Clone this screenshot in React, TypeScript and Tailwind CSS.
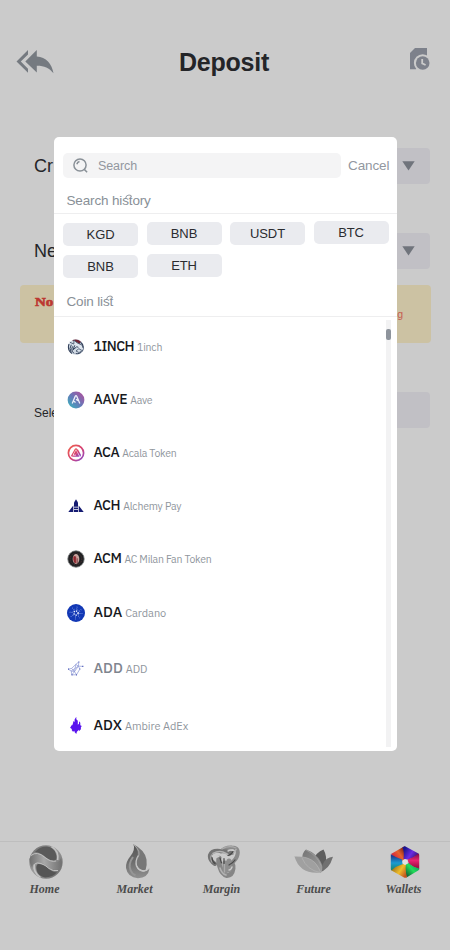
import React from "react";

const arial = "font-['Liberation_Sans',Arial,sans-serif]";
const plex = "font-['IBM_Plex_Sans','Noto_Sans',sans-serif]";

function ReplyAll() {
  return (
    <svg className="block h-[24px] w-[38px]" viewBox="0 0 38 24" fill="#757a80">
      <path d="M12 0v4.6L4.8 11.6 12 18.8v4L.5 11.6z" />
      <path d="M20.8 0v6.4C30 7 36 13.5 37.5 23.3 33 17.8 28 15.7 20.8 15.8v6.6L9.3 11.5z" />
    </svg>
  );
}

function Records() {
  return (
    <svg className="block h-[23px] w-[21px]" viewBox="0 0 21 23">
      <path d="M0 5 5 0h12v9L6 21.3H0z" fill="#7d818b" />
      <circle cx="12.7" cy="15" r="8.8" fill="#cbcbcb" />
      <circle cx="12.7" cy="15" r="6.8" fill="#7d818b" />
      <path d="M12.2 11v4.4l3.4 1.6" fill="none" stroke="#cbcbcb" strokeWidth="1.8" />
    </svg>
  );
}

function SelectButton() {
  return (
    <div className="flex h-[36px] w-[48px] items-center rounded-[4px] bg-[#c1c0c5] pl-[20px]">
      <svg className="block h-[10px] w-[13px]" viewBox="0 0 13 10" fill="#70747c"><path d="M.3.3h12.4L6.5 9.5z" /></svg>
    </div>
  );
}

function Chip({ label, className }: { label: string; className: string }) {
  return (
    <div className={"flex h-[23px] w-[75px] items-center justify-center rounded-[5px] bg-[#eaebef] text-[13px] tracking-[-0.1px] text-[#2b2c30] " + className}>
      {label}
    </div>
  );
}

/* Heading ending in an "st" pair joined by a small arc. */
function LigatureTitle({ before, after = "" }: { before: string; after?: string }) {
  return (
    <span>
      {before}
      <span className="relative">
        st
        <svg className="absolute top-[1px] left-[3px] h-[5px] w-[8px]" viewBox="0 0 8 5" fill="none" stroke="#899097" strokeWidth=".9">
          <path d="M.5 4.5Q1 1 4 1T6.4 3.2" />
        </svg>
      </span>
      {after}
    </span>
  );
}

const icons: Record<string, React.ReactNode> = {
  "1INCH": (
    <g>
      <circle cx="9" cy="9" r="7.7" fill="#cfd8e2" />
      <path d="M5 2.3Q10 0 14 3.7L12.5 6 9.3 4z" fill="#712334" />
      <path d="M2.8 4.2 6.8 6.1 7 2.3l3 2.5 5.2 2.4 1.3 3.5-1 2.1-3.6-2.1L9 13l3 1.5 2-1" fill="#dfe6ee" stroke="#3a4a63" strokeWidth=".8" />
      <path d="M4.3 6.8Q1.8 10.4 4.1 14M5.8 8.3Q3.3 11.6 7 15.5M7.8 7.3 6 11.8l3.7-3 1.7.5M8.7 15.6q4.6.8 6.9-3" fill="none" stroke="#35445e" strokeWidth="1" />
      <path d="M13.5 4.3q3 2 2.7 5.4M2 6q-2 6 3 9.5" fill="none" stroke="#33415a" strokeWidth="1.1" />
    </g>
  ),
  AAVE: (
    <g>
      <circle cx="9" cy="9" r="8.4" fill="url(#aave)" />
      <path d="m5.2 12.5 3-7.1q.8-1.4 1.6 0l3 7.1M7 10.3l1.5 1.2M9.1 8.3l1.8 1.5" fill="none" stroke="#eef1fa" strokeWidth="1.25" />
    </g>
  ),
  ACA: (
    <g fill="none" stroke="url(#aca)">
      <circle cx="9" cy="9" r="7.6" strokeWidth="1.7" />
      <path d="M4.4 12.2 8 5.7q1-1.5 2 0l3.6 6.5M5.2 12.2h6.3L9 7.4l-1.8 3.4M8.2 8.9l2 3.2M10.5 5.8l3 5.5" strokeWidth="1.2" />
    </g>
  ),
  ACH: (
    <g fill="#151b72">
      <path d="M9 2.2 11 5.5v4.3H7V5.5z" />
      <path d="M6.3 8.6v6.3H1.3zM11.7 8.6v6.3h5zM7 10.6h4v1.6H7zM7 13h4v1.9H7z" />
    </g>
  ),
  ACM: (
    <g>
      <circle cx="9" cy="9" r="8.2" fill="#1f2022" stroke="#777a7b" strokeWidth=".8" />
      <circle cx="9" cy="9" r="5.8" fill="none" stroke="#583536" strokeWidth=".8" strokeDasharray="1 1" />
      <ellipse cx="9" cy="9" rx="3.3" ry="5" fill="#c8a49f" />
      <path d="M6.2 6.5h3v7q-2.8-1-3-4z" fill="#a8343c" />
      <path d="M7.8 6v7M10.2 8.3v5" stroke="#702830" strokeWidth=".8" />
    </g>
  ),
  ADA: (
    <g>
      <circle cx="9" cy="9" r="9" fill="#1238b5" />
      <circle cx="9" cy="9" r="2.1" fill="none" stroke="#e4ebff" strokeWidth="1.5" strokeDasharray="1.25 .95" />
      <circle cx="9" cy="9" r="4" fill="none" stroke="#b5c9fa" strokeWidth="1" strokeDasharray=".9 2.24" />
      <circle cx="9" cy="9" r="6" fill="none" stroke="#9cb5f4" strokeWidth=".9" strokeDasharray=".8 3.91" />
    </g>
  ),
  ADD: (
    <g fill="none" stroke="#8d98d6" strokeWidth=".7">
      <path d="m1.2 9.2 3.4-.8 4.2-4 3-2.5-.4 4.2 1.4 3-3.3 5.7H4.8L4.2 11zM4.6 8.4l2.9 3.2 3.9-5.5M8.8 4.4l-1.3 7.2 2 3.2M4.2 11l3.3.6-2.7 3.2M8.8 4.4l2.6 1.7-7.2 4.9M11.4 6.1l4.2.3" />
      <path d="M1 9.2h1M11.4 2h1M12.4 9h1M4.5 14.9h1M9 14.9h1M15.1 6.4h1.3" stroke="#5966bd" strokeWidth="1.2" />
    </g>
  ),
  ADX: (
    <path d="M9.3.7v2.5l1.5 1.5v4l1.2-1V5.3l1.3 1.5v2.5l1.5.7-.9 1.2v2l-2 2v-1.5l-2 2-.6 2.3-1.8-2v-1.2l-1.5 1-1.2-1.5V13l-1.7-1.3 2-3.3.3 1.1 1.1-4.5 1.1.9V3.6z" fill="#5913ee" />
  ),
};

const coins = [
  { symbol: "1INCH", name: "1inch", row: "h-[53px]", s: "text-[14px] tracking-[-0.5px]", n: "text-[10.5px] tracking-[-0.2px]", muted: false },
  { symbol: "AAVE", name: "Aave", row: "h-[53px]", s: "text-[14px] tracking-[-0.35px]", n: "text-[10.5px] tracking-[-0.3px]", muted: false },
  { symbol: "ACA", name: "Acala Token", row: "h-[53px]", s: "text-[14px] tracking-[-0.4px]", n: "text-[10.5px] tracking-[-0.25px]", muted: false },
  { symbol: "ACH", name: "Alchemy Pay", row: "h-[53px]", s: "text-[14px] tracking-[-0.4px]", n: "text-[10.5px] tracking-[-0.2px]", muted: false },
  { symbol: "ACM", name: "AC Milan Fan Token", row: "h-[53px]", s: "text-[14px] tracking-[-0.4px]", n: "text-[10.5px] tracking-[-0.25px]", muted: false },
  { symbol: "ADA", name: "Cardano", row: "h-[55px]", s: "text-[14.5px] tracking-[0px]", n: "text-[11px] tracking-[-0.05px]", muted: false },
  { symbol: "ADD", name: "ADD", row: "h-[57px]", s: "text-[14.5px] tracking-[0px]", n: "text-[11px] tracking-[-0.2px]", muted: true },
  { symbol: "ADX", name: "Ambire AdEx", row: "h-[56px]", s: "text-[14.5px] tracking-[0px]", n: "text-[11px] tracking-[-0.05px]", muted: false },
];

function CoinRow({ coin }: { coin: (typeof coins)[number] }) {
  return (
    <div className={"flex items-center " + coin.row}>
      <svg className="block h-[18px] w-[18px] shrink-0" viewBox="0 0 18 18">{icons[coin.symbol]}</svg>
      <div className={"ml-[8.5px] flex items-baseline whitespace-nowrap " + plex}>
        <span className={"leading-[18px] font-medium " + coin.s + (coin.muted ? " text-[#7e858e]" : " text-[#17191d]")}>{coin.symbol}</span>
        <span className={"ml-[3px] leading-[18px] text-[#90969d] " + coin.n}>{coin.name}</span>
      </div>
    </div>
  );
}

function HomeIcon() {
  return (
    <svg className="block h-[34px] w-[36px]" viewBox="0 0 36 34">
      <circle cx="18" cy="17" r="16.7" fill="url(#silver)" />
      <path d="M7 7Q12 1.5 19 1.6q7 .7 9 7.4 1.5 5-1 6.5-5 .5-9-3Q13 7.500 7 7z" fill="#5a5a5a" />
      <path d="M29 27.500q-5 5-12 4.900-7-1-8.500-7.400-1-5 1.500-6 5-.4 9 2.700Q23 27 29 27.500z" fill="#555" />
      <path d="M1.500 14Q4 7.500 10 9q5 1 9 5.500 5 4 10 2.500 3-1 4-4 2.500 8-2 11-6 2.500-12-2.500-5-5-10-4-4 .5-5 5-2.500-4-2.500-8.500z" fill="url(#band)" />
      <path d="M3 10.500q6-5 14 2 6 5 11 3.500M6 24q-1-8 7-5.500 4 1.300 8 5 4 3 9 2" fill="none" stroke="#c0c0c0" strokeWidth="1" />
      <path d="M23.500 1.500Q31 6 29.700 15M6.300 19.500q-1.300 8 6.200 13" fill="none" stroke="#c4c4c4" strokeWidth="1.500" />
    </svg>
  );
}
function MarketIcon() {
  return (
    <svg className="block h-[35px] w-[25px]" viewBox="0 0 25 35">
      <path d="M8.500.300q11.500 6 13 15.200.8 6-1 11-7 0-9-6.500-1-5 1-10z" fill="#777" />
      <path d="M8.500.300Q10.500 6 5.500 12 .500 18 1 24q1.500 9.500 12 10.200 10 0 11.500-9.700-3 3.500-7 3-6-1.500-6.300-7Q11 16 13 12 13 5 8.500.300z" fill="url(#flame)" />
      <path d="M13.300 11.500Q10 17 11.500 22q2.500 5.500 7.500 5 3.500-.500 5-3" fill="none" stroke="#c4c4c4" strokeWidth="1.300" />
      <path d="M9 1q8 7 3.500 13" fill="none" stroke="#b5b5b5" strokeWidth=".8" />
      <path d="M8 13q-5 7-2.500 13 1.500 4 5 5.500" fill="none" stroke="#969696" strokeWidth="2" />
    </svg>
  );
}
function MarginIcon() {
  return (
    <svg className="block h-[33px] w-[34px]" viewBox="0 0 34 33">
      <g fill="none" strokeLinecap="round">
        <path d="M14 6.500Q18 2 25 2.500q7 0 5.500 7-1 5-6.500 9" stroke="#8a8a8a" strokeWidth="4" />
        <path d="M8 19Q2 15 3 10q2-5 10-4 7 0 12 2" stroke="#747474" strokeWidth="4" />
        <path d="M12 13q-1 3 1 9 2 7 7 8.500 5 0 6-7 .500-3-1-5" stroke="#858585" strokeWidth="5" />
        <path d="M18 18v10M22 16v9" stroke="#8e8e8e" strokeWidth="5" />
        <path d="M6 8.500q7-4 13 0l3 2q5-2 7-6M13 23q2 6 6 7" stroke="#b2b2b2" strokeWidth="1.600" />
        <path d="M15 4Q22 0 29 3M5 17q-2-4-.500-7M17.500 19v8" stroke="#ababab" strokeWidth="1.200" />
        <path d="M8 18.500q-3-2-3-6M13 13l1.500 5M17 13.500v5M22 20q4-2 6-5M21 10.500q4-1 5-4" stroke="#484848" strokeWidth="1.200" />
        <path d="M9 12.500 12 11M22 25q2 0 3-3M21 6q3-1.500 5-1" stroke="#cbcbcb" strokeWidth="1.400" />
      </g>
    </svg>
  );
}
function FutureIcon() {
  return (
    <svg className="block h-[25px] w-[40px]" viewBox="0 0 40 25">
      <path d="M19 12Q22 3 29.500.500q4.500 8 1.500 15-2 5.500-6 8z" fill="#5e5e5e" />
      <path d="M39 7.700q-7 .500-10 7-2 5-4 8.300 10-1.500 14-15.300z" fill="#707070" />
      <path d="M8 12Q8 3 12 .500q10 3.500 14.500 12 3.500 6 .500 11.500z" fill="url(#petal)" />
      <path d="M.500 7.500q14-.500 20.500 6.200 5 5 6 9.800Q6 26 .500 7.500z" fill="#a0a0a0" />
      <path d="M.500 7.500q14-.500 20.500 6.200 4 5 5.500 9.500M8 9q5 12 18 14.500" stroke="#b8b8b8" strokeWidth=".6" fill="none" />
      <path d="M12 1q11 5 15 15.500" stroke="#aaa" strokeWidth=".6" fill="none" />
    </svg>
  );
}
function WalletIcon() {
  return (
    <svg className="block h-[32px] w-[30px]" viewBox="0 0 30 32">
      <defs>
        <linearGradient id="w1" gradientUnits="userSpaceOnUse" x1="4" y1="13" x2="15" y2="5"><stop stopColor="#d3203f" /><stop offset=".55" stopColor="#e5622c" /><stop offset="1" stopColor="#86261c" /></linearGradient>
        <linearGradient id="w2" gradientUnits="userSpaceOnUse" x1="14" y1="4" x2="26" y2="12"><stop stopColor="#1a1590" /><stop offset=".55" stopColor="#6a2be2" /><stop offset="1" stopColor="#3c167c" /></linearGradient>
        <linearGradient id="w3" gradientUnits="userSpaceOnUse" x1="24" y1="8" x2="24" y2="21"><stop stopColor="#7e1148" /><stop offset=".5" stopColor="#ea2273" /><stop offset="1" stopColor="#a11045" /></linearGradient>
        <linearGradient id="w4" gradientUnits="userSpaceOnUse" x1="27" y1="18" x2="16" y2="28"><stop stopColor="#0e9e62" /><stop offset=".5" stopColor="#22dc5a" /><stop offset="1" stopColor="#126a3a" /></linearGradient>
        <linearGradient id="w5" gradientUnits="userSpaceOnUse" x1="16" y1="29" x2="4" y2="21"><stop stopColor="#c4541e" /><stop offset=".5" stopColor="#efbd2a" /><stop offset="1" stopColor="#a67b1e" /></linearGradient>
        <linearGradient id="w6" gradientUnits="userSpaceOnUse" x1="5" y1="24" x2="5" y2="10"><stop stopColor="#18846c" /><stop offset=".5" stopColor="#1a9ad0" /><stop offset="1" stopColor="#1d3c8e" /></linearGradient>
      </defs>
      <path d="M13.500.700 15 .200q1.500 4 .500 12.800L11 16Q6 14 1 8z" fill="url(#w1)" />
      <path d="m12.500 1.200 2.500-1L28 7.300l1 1Q23 12.500 18 13.500L13.500 13Q14.500 6 12.500 1.200z" fill="url(#w2)" />
      <path d="M28.500 7.500q.7.500.7 1.500v14.500Q23 21 19 18l-1.500-4.500Q24 11.500 28.500 7.500z" fill="url(#w3)" />
      <path d="M29.200 22.500q0 1.500-1 2.100L16.500 31.500Q14.500 24 15 19l3.500-2q4 4 10.700 5.500z" fill="url(#w4)" />
      <path d="M17 31.200q-1.500 1-3 .3L2 24.700 1 24q6-6 10.500-6.500L16 18.500q-1 6 1 12.700z" fill="url(#w5)" />
      <path d="M1.300 24.400Q.800 24 .800 23V8.200Q7 12 12 13.500l1 4.500q-7 2-11.700 6.400z" fill="url(#w6)" />
      <path d="m15 13 2.600 1.500v3L15 19l-2.600-1.500v-3z" fill="#e2e2e2" />
    </svg>
  );
}

function NavItem({ label, className, children }: { label: string; className: string; children: React.ReactNode }) {
  return (
    <div className={"flex flex-col items-center " + className}>
      <div className="flex h-[36px] items-center">{children}</div>
      <span className="mt-[1.5px] ml-[1px] font-['Liberation_Serif','Times_New_Roman',serif] text-[12px] leading-[14px] font-bold text-[#4b4b4b] italic">{label}</span>
    </div>
  );
}

export default function App() {
  return (
    <main className={"relative flex h-[950px] w-[450px] flex-col overflow-hidden bg-[#cbcbcb] text-[#242528] " + arial}>
      <svg className="absolute h-0 w-0">
        <defs>
          <linearGradient id="aave" x1="1" y1="0" x2="0" y2="1"><stop stopColor="#bb4b99" /><stop offset=".5" stopColor="#6877b8" /><stop offset="1" stopColor="#32b9bd" /></linearGradient>
          <linearGradient id="aca" x1="0" y1="0" x2="1" y2="1"><stop stopColor="#ef634e" /><stop offset=".55" stopColor="#d64072" /><stop offset="1" stopColor="#844bcf" /></linearGradient>
          <linearGradient id="silver" x1="0" y1="0" x2="1" y2="1"><stop stopColor="#686868" /><stop offset=".45" stopColor="#9b9b9b" /><stop offset="1" stopColor="#666" /></linearGradient>
          <linearGradient id="band"><stop stopColor="#707070" /><stop offset=".45" stopColor="#a8a8a8" /><stop offset="1" stopColor="#707070" /></linearGradient>
          <linearGradient id="flame" x1="0" y1="0" x2="0" y2="1"><stop stopColor="#555" /><stop offset=".5" stopColor="#6c6c6c" /><stop offset="1" stopColor="#909090" /></linearGradient>
          <linearGradient id="petal" x1="0" y1="0" x2="1" y2="1"><stop stopColor="#747474" /><stop offset="1" stopColor="#a0a0a0" /></linearGradient>
        </defs>
      </svg>

      <header className="grid h-[124px] grid-cols-[1fr_auto_1fr] items-center pr-[19px] pl-[16px]">
        <ReplyAll />
        <h1 className="mb-[1px] pl-[1px] text-[25px] leading-[30px] font-bold tracking-[-0.25px]">Deposit</h1>
        <div className="justify-self-end pb-[5px]"><Records /></div>
      </header>
      <section className="mt-[24px] flex h-[36px] items-center justify-between pr-[20px] pl-[34px] text-[18px]">
        <span>Cr</span><SelectButton />
      </section>
      <section className="mt-[49px] flex h-[36px] items-center justify-between pr-[20px] pl-[34px] text-[18px]">
        <span>Ne</span><SelectButton />
      </section>
      <aside className="mt-[16px] ml-[20px] flex h-[58px] w-[411px] justify-between rounded-[4px] bg-[#ccc2a3] pr-[28px] pl-[15px]">
        <span className="mt-[9px] origin-left scale-x-115 font-['Liberation_Serif',serif] text-[13px] leading-[15px] font-bold text-[#bc3830] [-webkit-text-stroke:0.6px_#bc3830]">No</span>
        <span className="mt-[23px] text-[10.5px] leading-[13px] text-[#c65b50]">g</span>
      </aside>
      <section className="mt-[48px] flex h-[38px] items-center justify-between pr-[20px] pl-[34px] text-[12px]">
        <span className="mt-[5px]">Sele</span>
        <div className="h-[36px] w-[60px] rounded-[4px] bg-[#c1c0c5]" />
      </section>
      <nav className="mt-auto flex h-[109px] items-start border-t border-[#bebebe] pt-[2px]">
        <NavItem label="Home" className="ml-[23px] w-[42px]"><div className="ml-[4px]"><HomeIcon /></div></NavItem>
        <NavItem label="Market" className="ml-[47px] w-[44px]"><div className="mb-[2px] ml-[7px]"><MarketIcon /></div></NavItem>
        <NavItem label="Margin" className="ml-[43px] w-[44px]"><div className="mb-[1px] ml-[5px]"><MarginIcon /></div></NavItem>
        <NavItem label="Future" className="ml-[48px] w-[44px]"><div className="mb-[2px] ml-[2px]"><FutureIcon /></div></NavItem>
        <NavItem label="Wallets" className="ml-[46px] w-[44px]"><div className="ml-[4px]"><WalletIcon /></div></NavItem>
      </nav>

      <div role="dialog" className="absolute top-[137px] left-[53.5px] flex h-[614px] w-[343px] flex-col overflow-hidden rounded-[5px] bg-white">
        <div className="mt-[16px] flex h-[25px] items-center pl-[9.5px]">
          <div className="flex h-[25px] w-[278px] items-center rounded-[5px] bg-[#f4f4f5] pl-[10px]">
            <svg className="block h-[15px] w-[15px]" viewBox="0 0 15 15" fill="none" stroke="#899097" strokeWidth="1.5">
              <circle cx="7" cy="7" r="6.1" /><path d="m11.3 11.4 2.800 2.800M3.800 6.300q.7-2.200 2.700-2.700" />
            </svg>
            <span className="ml-[10px] text-[12.5px] leading-[16px] tracking-[-0.1px] text-[#92979f]">Search</span>
          </div>
          <span className="ml-[7px] text-[13.5px] leading-[16px] tracking-[-0.1px] text-[#92979f]">Cancel</span>
        </div>
        <h2 className="mt-[14px] h-[22px] border-b border-[#eeeeef] pl-[13px] text-[13.5px] leading-[18px] tracking-[-0.15px] text-[#899097]">
          <LigatureTitle before="Search hi" after="ory" />
        </h2>
        <div className="mt-[7px] grid h-[57px] grid-cols-[75px_75px_75px_75px] grid-rows-[33px_24px] gap-x-[8.5px] pl-[9.5px]">
          <Chip label="KGD" className="mt-[2px]" />
          <Chip label="BNB" className="mt-[1px]" />
          <Chip label="USDT" className="mt-[1px]" />
          <Chip label="BTC" className="" />
          <Chip label="BNB" className="mt-[1px]" />
          <Chip label="ETH" className="" />
        </div>
        <h2 className="mt-[14px] h-[25px] border-b border-[#eeeeef] pl-[13px] text-[13.5px] leading-[19px] tracking-[-0.15px] text-[#899097]">
          <LigatureTitle before="Coin li" />
        </h2>
        <div className="flex min-h-0 flex-1 justify-between">
          <div className="mt-[3px] pl-[13.5px]">{coins.map((coin) => <CoinRow key={coin.symbol} coin={coin} />)}</div>
          <div className="mt-[3px] mr-[5.5px] mb-[4px] w-[5px] bg-[#f2f2f3] pt-[9px]"><div className="h-[11px] w-[5px] rounded-[2px] bg-[#8e949c]" /></div>
        </div>
      </div>
    </main>
  );
}
